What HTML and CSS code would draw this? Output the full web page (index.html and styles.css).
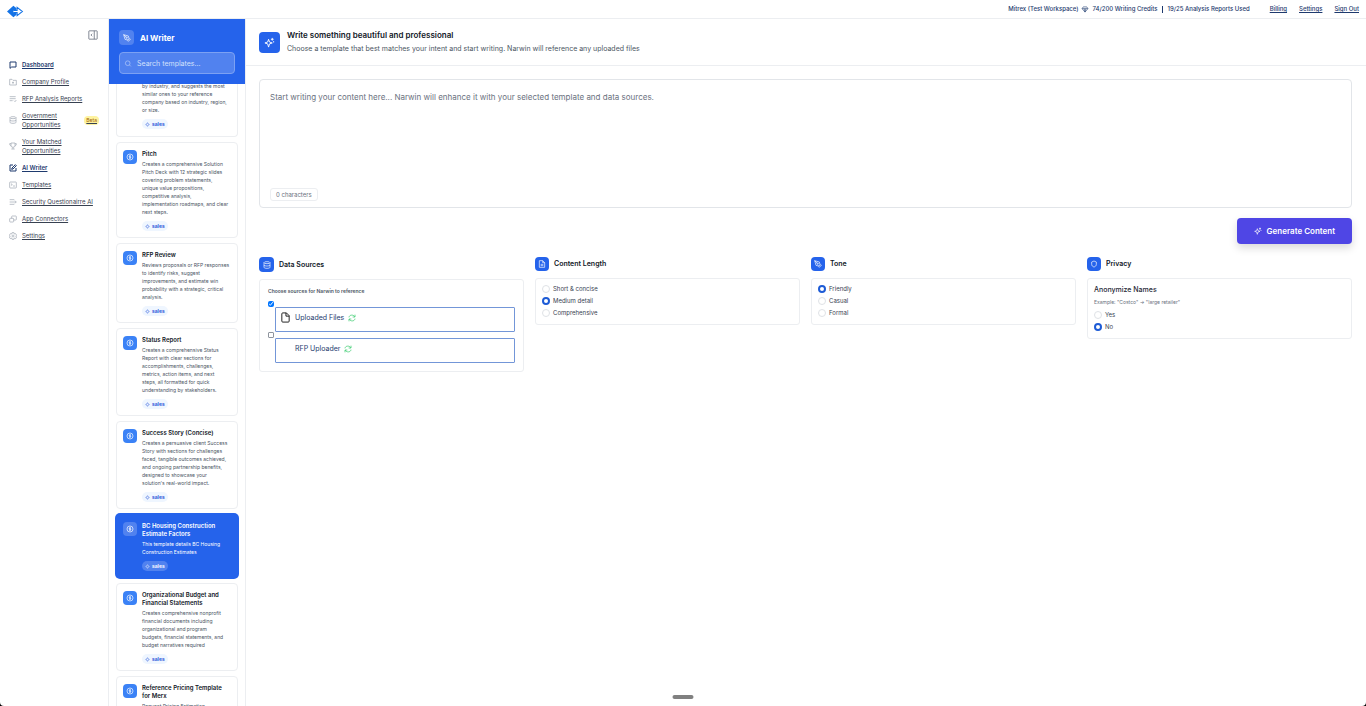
FILE: index.html
```html
<!DOCTYPE html>
<html lang="en">
<head>
	<meta charset="UTF-8">
	<title>AI Writer</title>
	<link rel="stylesheet" href="styles.css">
</head>
<body>
	<!-- icons -->
	<svg class="sprite" xmlns="http://www.w3.org/2000/svg">
		<symbol id="i-chat" viewBox="0 0 24 24"><path d="M3 3h18v15H8l-5 4z"/></symbol>
		<symbol id="i-folder" viewBox="0 0 24 24"><path d="M2 4h7l3 3h10v14H2z"/><path d="M12 11v6M9 14h6"/></symbol>
		<symbol id="i-lines" viewBox="0 0 24 24"><path d="M2 5h18M2 11h18M2 17h9M15 17l3 3 4-5"/></symbol>
		<symbol id="i-db" viewBox="0 0 24 24"><ellipse cx="12" cy="5" rx="9" ry="3"/><path d="M3 5v14c0 4 18 4 18 0V5M3 12c0 4 18 4 18 0"/></symbol>
		<symbol id="i-cup" viewBox="0 0 24 24"><path d="M6 3h12v7a6 6 0 0 1-12 0zM6 5H2c0 4 1 6 4 6M18 5h4c0 4-1 6-4 6M12 16v5M7 21h10"/></symbol>
		<symbol id="i-edit" viewBox="0 0 24 24"><path d="M12 3H3v18h18v-9"/><path d="M19 2l3 3-10 10-4 1 1-4z"/></symbol>
		<symbol id="i-image" viewBox="0 0 24 24"><rect x="2" y="3" width="20" height="18" rx="2"/><path d="M6 8l4 3-4 2M12 15h6"/></symbol>
		<symbol id="i-indent" viewBox="0 0 24 24"><path d="M2 5h14M2 12h19M2 19h14M18 8l4 4-4 4"/></symbol>
		<symbol id="i-plug" viewBox="0 0 24 24"><path d="M8 10V5a2 2 0 0 1 2-2h10a2 2 0 0 1 2 2v8a2 2 0 0 1-2 2h-6"/><rect x="2" y="10" width="12" height="11" rx="2"/></symbol>
		<symbol id="i-gear" viewBox="0 0 24 24"><path d="M9 2h6l1 4 4-1 3 5-3 2 3 3-3 5-4-2-1 4H9l-1-4-4 2-3-5 3-3-3-2 3-5 4 1z"/><circle cx="12" cy="12" r="3"/></symbol>
		<symbol id="i-panel" viewBox="0 0 24 24"><rect x="2" y="2" width="20" height="20" rx="1"/><path d="M15 2v20M10 9l-3 3 3 3"/></symbol>
		<symbol id="i-pen" viewBox="0 0 24 24"><path d="M2 2l14 4 2 7-5 5-7-2zM2 2l8 8"/><circle cx="11" cy="11" r="2"/><path d="M14 20l6-6 2 2-6 6z"/></symbol>
		<symbol id="i-search" viewBox="0 0 24 24"><circle cx="11" cy="11" r="8"/><path d="M17 17l5 5"/></symbol>
		<symbol id="i-spark" viewBox="0 0 24 24"><path d="M10 5l2 6 6 2-6 2-2 7-2-7-6-2 6-2zM18 2v6M15 5h6M21 9v3"/></symbol>
		<symbol id="i-coin" viewBox="0 0 24 24"><circle cx="12" cy="12" r="9"/><path d="M15 9h-4a1 1 0 0 0 0 3h2a1 1 0 0 1 0 3H9M12 6v12"/></symbol>
		<symbol id="i-tag" viewBox="0 0 24 24"><path d="M12 3l3 6 6 3-6 3-3 6-3-6-6-3 6-3z"/></symbol>
		<symbol id="i-doc" viewBox="0 0 24 24"><path d="M4 2h10l6 6v14H4zM14 2v6h6M8 13h8M8 17h8"/></symbol>
		<symbol id="i-file" viewBox="0 0 24 24"><path d="M6 2h8l6 6v12a2 2 0 0 1-2 2H6a2 2 0 0 1-2-2V4a2 2 0 0 1 2-2zM13 2v7h7"/></symbol>
		<symbol id="i-shield" viewBox="0 0 24 24"><path d="M12 3l7 3v7c0 4-3 7-7 8-4-1-7-4-7-8V6z"/></symbol>
		<symbol id="i-sync" viewBox="0 0 24 24"><path d="M3 10c1-8 13-9 17-2M21 2v7h-7M21 14c-1 8-13 9-17 2M3 22v-7h7"/></symbol>
		<symbol id="i-gem" viewBox="0 0 24 24"><path d="M6 3h12l4 6-10 12L2 9zM2 9h20M9 9l3 11 3-11"/></symbol>
	</svg>

	<div class="page">
		<header class="topbar">
			<a class="logo" href="#" aria-label="Home">
				<svg viewBox="0 0 32 24"><path fill="#1473e6" d="M0 12L12 1l6 5v4h-6v4h6v4l-6 5z"/><path fill="none" stroke="#1473e6" stroke-width="2" d="M12 10h7V4l10 8-10 8v-6h-7"/></svg>
			</a>
			<div class="usage">
				<span>Mitrex (Test Workspace)</span>
				<svg class="icon"><use href="#i-gem"/></svg>
				<span>74/200 Writing Credits</span>
				<span class="bar"></span>
				<span>19/25 Analysis Reports Used</span>
			</div>
			<nav class="account">
				<a href="#">Billing</a>
				<a href="#">Settings</a>
				<a href="#">Sign Out</a>
			</nav>
		</header>

		<div class="columns">
			<aside class="sidebar">
				<button class="collapse" aria-label="Collapse menu"><svg class="icon"><use href="#i-panel"/></svg></button>
				<nav class="menu">
					<a class="on" href="#"><svg class="icon"><use href="#i-chat"/></svg><span>Dashboard</span></a>
					<a href="#"><svg class="icon"><use href="#i-folder"/></svg><span>Company Profile</span></a>
					<a href="#"><svg class="icon"><use href="#i-lines"/></svg><span>RFP Analysis Reports</span></a>
					<a href="#"><svg class="icon"><use href="#i-db"/></svg><span>Government Opportunities</span><em class="beta">Beta</em></a>
					<a href="#"><svg class="icon"><use href="#i-cup"/></svg><span>Your Matched<br>Opportunities</span></a>
					<a class="on" href="#"><svg class="icon"><use href="#i-edit"/></svg><span>AI Writer</span></a>
					<a href="#"><svg class="icon"><use href="#i-image"/></svg><span>Templates</span></a>
					<a href="#"><svg class="icon"><use href="#i-indent"/></svg><span>Security Questionairre AI</span></a>
					<a href="#"><svg class="icon"><use href="#i-plug"/></svg><span>App Connectors</span></a>
					<a href="#"><svg class="icon"><use href="#i-gear"/></svg><span>Settings</span></a>
				</nav>
			</aside>

			<section class="templates">
				<div class="templates-head">
					<h2><span class="tile"><svg class="icon"><use href="#i-pen"/></svg></span>AI Writer</h2>
					<label class="search">
						<svg class="icon"><use href="#i-search"/></svg>
						<input type="search" placeholder="Search templates..." aria-label="Search templates">
					</label>
				</div>
				<div class="list">
					<article class="card cut">
						<div class="card-text">
							<p>by industry, and suggests the most similar ones to your reference company based on industry, region, or size.</p>
							<span class="tag"><svg class="icon"><use href="#i-tag"/></svg>sales</span>
						</div>
					</article>
					<article class="card">
						<span class="tile"><svg class="icon"><use href="#i-coin"/></svg></span>
						<div class="card-text">
							<h3>Pitch</h3>
							<p>Creates a comprehensive Solution Pitch Deck with 12 strategic slides covering problem statements,<br>unique value propositions,<br>competitive analysis,<br>implementation roadmaps, and clear next steps.</p>
							<span class="tag"><svg class="icon"><use href="#i-tag"/></svg>sales</span>
						</div>
					</article>
					<article class="card">
						<span class="tile"><svg class="icon"><use href="#i-coin"/></svg></span>
						<div class="card-text">
							<h3>RFP Review</h3>
							<p>Reviews proposals or RFP responses to identify risks, suggest improvements, and estimate win probability with a strategic, critical analysis.</p>
							<span class="tag"><svg class="icon"><use href="#i-tag"/></svg>sales</span>
						</div>
					</article>
					<article class="card">
						<span class="tile"><svg class="icon"><use href="#i-coin"/></svg></span>
						<div class="card-text">
							<h3>Status Report</h3>
							<p>Creates a comprehensive Status Report with clear sections for accomplishments, challenges, metrics, action items, and next<br>steps, all formatted for quick<br>understanding by stakeholders.</p>
							<span class="tag"><svg class="icon"><use href="#i-tag"/></svg>sales</span>
						</div>
					</article>
					<article class="card">
						<span class="tile"><svg class="icon"><use href="#i-coin"/></svg></span>
						<div class="card-text">
							<h3>Success Story (Concise)</h3>
							<p>Creates a persuasive client Success Story with sections for challenges faced, tangible outcomes achieved, and ongoing partnership benefits, designed to showcase your solution's real-world impact.</p>
							<span class="tag"><svg class="icon"><use href="#i-tag"/></svg>sales</span>
						</div>
					</article>
					<article class="card selected">
						<span class="tile"><svg class="icon"><use href="#i-coin"/></svg></span>
						<div class="card-text">
							<h3>BC Housing Construction Estimate Factors</h3>
							<p>This template details BC Housing Construction Estimates</p>
							<span class="tag"><svg class="icon"><use href="#i-tag"/></svg>sales</span>
						</div>
					</article>
					<article class="card">
						<span class="tile"><svg class="icon"><use href="#i-coin"/></svg></span>
						<div class="card-text">
							<h3>Organizational Budget and Financial Statements</h3>
							<p>Creates comprehensive nonprofit financial documents including<br>organizational and program<br>budgets, financial statements, and<br>budget narratives required</p>
							<span class="tag"><svg class="icon"><use href="#i-tag"/></svg>sales</span>
						</div>
					</article>
					<article class="card">
						<span class="tile"><svg class="icon"><use href="#i-coin"/></svg></span>
						<div class="card-text">
							<h3>Reference Pricing Template for Merx</h3>
							<p>Request Pricing Estimation</p>
							<span class="tag"><svg class="icon"><use href="#i-tag"/></svg>sales</span>
						</div>
					</article>
				</div>
			</section>

			<main class="writer">
				<div class="intro">
					<span class="tile"><svg class="icon"><use href="#i-spark"/></svg></span>
					<div>
						<h1>Write something beautiful and professional</h1>
						<p>Choose a template that best matches your intent and start writing. Narwin will reference any uploaded files</p>
					</div>
				</div>
				<form class="work">
					<div class="editor">
						<textarea aria-label="Content" placeholder="Start writing your content here... Narwin will enhance it with your selected template and data sources."></textarea>
						<span class="count">0 characters</span>
					</div>
					<button class="generate" type="button"><svg class="icon"><use href="#i-spark"/></svg>Generate Content</button>

					<div class="options">
						<section>
							<h2><span class="tile large"><svg class="icon"><use href="#i-db"/></svg></span>Data Sources</h2>
							<div class="box sources">
								<p class="hint">Choose sources for Narwin to reference</p>
								<input type="checkbox" id="src-files" checked>
								<label for="src-files"><svg class="icon file"><use href="#i-file"/></svg>Uploaded Files<svg class="icon sync"><use href="#i-sync"/></svg></label>
								<input type="checkbox" id="src-rfp">
								<label for="src-rfp"><span class="file"></span>RFP Uploader<svg class="icon sync"><use href="#i-sync"/></svg></label>
							</div>
						</section>
						<section>
							<h2><span class="tile"><svg class="icon"><use href="#i-doc"/></svg></span>Content Length</h2>
							<div class="box">
								<label class="radio"><input type="radio" name="length">Short &amp; concise</label>
								<label class="radio"><input type="radio" name="length" checked>Medium detail</label>
								<label class="radio"><input type="radio" name="length">Comprehensive</label>
							</div>
						</section>
						<section>
							<h2><span class="tile"><svg class="icon"><use href="#i-pen"/></svg></span>Tone</h2>
							<div class="box">
								<label class="radio"><input type="radio" name="tone" checked>Friendly</label>
								<label class="radio"><input type="radio" name="tone">Casual</label>
								<label class="radio"><input type="radio" name="tone">Formal</label>
							</div>
						</section>
						<section>
							<h2><span class="tile"><svg class="icon"><use href="#i-shield"/></svg></span>Privacy</h2>
							<div class="box">
								<h3>Anonymize Names</h3>
								<p class="example">Example: "Costco" → "large retailer"</p>
								<label class="radio"><input type="radio" name="anon">Yes</label>
								<label class="radio"><input type="radio" name="anon" checked>No</label>
							</div>
						</section>
					</div>
				</form>
			</main>
		</div>
		<div class="handle"></div>
	</div>
</body>
</html>
```
FILE: styles.css
```css
* {
	box-sizing: border-box;
}
html {
	background-color: #000;
}
body {
	margin: 0;
	font-family: Inter, "Liberation Sans", sans-serif;
	font-size: 6px;
	line-height: 8px;
	color: #374151;
}
h1, h2, h3, p {
	margin: 0;
}
button, input, textarea {
	font-family: inherit;
}
.sprite {
	display: none;
}
.icon {
	display: block;
	fill: none;
	flex: none;
	height: 8px;
	stroke: currentColor;
	stroke-width: 2;
	width: 8px;
}
.tile {
	align-items: center;
	background-color: #2563eb;
	border-radius: 4px;
	color: #fff;
	display: flex;
	flex: none;
	height: 14px;
	justify-content: center;
	width: 14px;
}
.tile.large {
	height: 15px;
	width: 15px;
}
.page {
	background-color: #fff;
	border-radius: 0 0 4px 4px;
	display: flex;
	flex-direction: column;
	height: 100vh;
	overflow: hidden;
	position: relative;
}

/* top bar */
.topbar {
	align-items: center;
	border-bottom: 1px solid #eceef1;
	color: #1e3a6e;
	display: flex;
	flex: none;
	font-weight: 500;
	height: 19px;
	padding: 0 7px;
}
.topbar a {
	color: inherit;
}
.logo svg {
	display: block;
	height: 13px;
	margin-top: 4px;
	width: 17px;
}
.usage {
	align-items: center;
	display: flex;
	gap: 3px;
	margin-left: auto;
}
.usage .icon {
	height: 7px;
}
.bar {
	background-color: #1e3a6e;
	height: 7px;
	margin: 0 2px 0 1px;
	width: 1px;
}
.account {
	display: flex;
	gap: 12px;
	margin-left: 20px;
}

.columns {
	display: flex;
	flex: 1;
	min-height: 0;
}

/* sidebar */
.sidebar {
	border-right: 1px solid #eceef1;
	flex: none;
	padding: 11px 9px;
	width: 109px;
}
.collapse {
	background: none;
	border: none;
	color: #6b7280;
	display: block;
	margin: 0 1px 0 auto;
	padding: 0;
}
.collapse .icon {
	height: 10px;
	width: 10px;
}
.menu {
	display: flex;
	flex-direction: column;
	gap: 8px;
	line-height: 9px;
	margin-top: 20px;
}
.menu a {
	align-items: center;
	color: #374151;
	display: flex;
	gap: 5px;
}
.menu .icon {
	color: #9ca3af;
}
.menu .on, .menu .on .icon {
	color: #1e3a6e;
	font-weight: 600;
}
.menu .on .icon {
	stroke-width: 3;
}
.beta {
	background-color: #fef3a0;
	border-radius: 4px;
	color: #a16207;
	font-size: 5px;
	font-style: normal;
	margin-left: auto;
	padding: 0 2px;
}

/* templates */
.templates {
	border-right: 1px solid #eceef1;
	display: flex;
	flex: none;
	flex-direction: column;
	width: 137px;
}
.templates-head {
	background-color: #2563eb;
	color: #fff;
	flex: none;
	padding: 11px 10px 10px;
}
.templates-head h2 {
	align-items: center;
	display: flex;
	font-size: 8px;
	gap: 6px;
}
.templates-head .tile {
	background-color: #5182ef;
	height: 15px;
	width: 15px;
}
.search {
	align-items: center;
	background-color: #5182ef;
	border: 1px solid #7ca1f3;
	border-radius: 4px;
	display: flex;
	gap: 5px;
	height: 22px;
	margin-top: 7px;
	padding: 0 4px;
}
.search .icon {
	color: #c5d5fa;
	height: 7px;
}
.search input {
	background: none;
	border: none;
	color: #fff;
	flex: 1;
	font-size: 7px;
	min-width: 0;
	outline: none;
	padding: 0;
}
.search input::placeholder {
	color: #d3e0fc;
}
.list {
	display: flex;
	flex: 1;
	flex-direction: column;
	gap: 5px;
	min-height: 0;
	overflow: hidden;
	padding: 0 7px;
}
.card {
	border: 1px solid #eceef1;
	border-radius: 4px;
	display: flex;
	flex: none;
	gap: 5px;
	padding: 7px 6px 6px;
}
/* first card is scrolled half way under the header */
.card.cut {
	border-radius: 0 0 4px 4px;
	border-top: none;
	margin-top: -2px;
	padding: 0 6px 7px 25px;
}
.card .tile {
	background-color: #3b82f6;
}
.card h3 {
	color: #111827;
	font-size: 6px;
	font-weight: 600;
	margin-bottom: 2px;
}
.card p {
	color: #4b5563;
	font-size: 5px;
}
.tag {
	align-items: center;
	background-color: #eff6ff;
	border-radius: 5px;
	color: #1d4ed8;
	display: inline-flex;
	font-size: 5px;
	font-weight: 600;
	gap: 2px;
	height: 10px;
	margin-top: 5px;
	padding: 0 3px;
	vertical-align: top;
}
.tag .icon {
	height: 5px;
	width: 5px;
}
.card.selected {
	background-color: #2563eb;
	border-color: #2563eb;
	box-shadow: 0 0 0 1px #2563eb;
}
.card.selected .tile, .card.selected .tag {
	background-color: #5182ef;
}
.card.selected h3, .card.selected p, .card.selected .tag {
	color: #fff;
}

/* writer */
.writer {
	flex: 1;
	min-width: 0;
}
.intro {
	align-items: center;
	border-bottom: 1px solid #eceef1;
	display: flex;
	gap: 7px;
	height: 47px;
	padding: 0 14px 0 13px;
}
.intro .tile {
	height: 21px;
	width: 21px;
}
.intro .tile .icon {
	height: 11px;
	width: 11px;
}
.intro h1 {
	color: #111827;
	font-size: 8px;
	font-weight: 600;
	line-height: 12px;
}
.intro p {
	color: #4b5563;
	font-size: 7px;
	line-height: 12px;
	margin-top: 2px;
}
.work {
	display: flex;
	flex-direction: column;
	padding: 13px 14px 13px 13px;
}
.editor {
	align-items: flex-start;
	border: 1px solid #e2e5e9;
	border-radius: 4px;
	display: flex;
	flex-direction: column;
	padding: 10px 10px 6px;
}
.editor textarea {
	border: none;
	color: #374151;
	font-size: 8px;
	height: 98px;
	line-height: 14px;
	outline: none;
	padding: 0;
	resize: none;
	width: 100%;
}
.editor textarea::placeholder {
	color: #6b7280;
}
.count {
	border: 1px solid #eceef1;
	border-radius: 3px;
	color: #6b7280;
	line-height: 11px;
	padding: 0 5px;
}
.generate {
	align-items: center;
	align-self: flex-end;
	background-color: #4f46e5;
	border: none;
	border-radius: 4px;
	box-shadow: 0 4px 8px rgba(0,0,0, .15);
	color: #fff;
	display: flex;
	font-size: 8px;
	font-weight: 600;
	gap: 5px;
	height: 26px;
	margin-top: 10px;
	padding: 0 17px;
}
.options {
	align-items: start;
	display: grid;
	gap: 11px;
	grid-template-columns: repeat(4, 1fr);
	margin-top: 13px;
}
.options h2 {
	align-items: center;
	color: #111827;
	display: flex;
	font-size: 7px;
	font-weight: 600;
	gap: 5px;
}
.box {
	border: 1px solid #eceef1;
	border-radius: 3px;
	display: flex;
	flex-direction: column;
	gap: 4px;
	margin-top: 7px;
	padding: 6px 6px 7px;
}
.box h3 {
	color: #1f2937;
	font-size: 7px;
	font-weight: 500;
	line-height: 9px;
}
.example {
	color: #6b7280;
	font-size: 5px;
	margin-bottom: 1px;
}
.radio {
	align-items: center;
	display: flex;
	gap: 3px;
}
.radio input {
	appearance: none;
	background-color: #fff;
	border: 1px solid #dfe2e6;
	border-radius: 50%;
	height: 8px;
	margin: 0;
	width: 8px;
}
.radio input:checked {
	border: 2px solid #1d5bd6;
}
.sources {
	gap: 0;
	padding: 7px 8px 8px;
}
.hint {
	color: #4b5563;
	font-size: 5px;
	font-weight: 600;
	margin-bottom: 6px;
}
.sources input {
	height: 6px;
	margin: 0;
	width: 6px;
}
.sources input:not(:checked) {
	appearance: none;
	border: 1px solid #8f959e;
	border-radius: 1px;
}
.sources label {
	align-items: center;
	border: 1px solid #7396d8;
	border-radius: 1px;
	color: #1e3a6e;
	display: flex;
	font-size: 7px;
	gap: 4px;
	height: 25px;
	margin-left: 7px;
	padding: 0 4px 4px;
}
.sources .file {
	color: #111;
	height: 11px;
	width: 11px;
}
.sources .sync {
	color: #22c55e;
}

.handle {
	background-color: #808080;
	border-radius: 2px;
	bottom: 7px;
	height: 4px;
	left: 50%;
	position: absolute;
	transform: translateX(-50%);
	width: 21px;
}
```
